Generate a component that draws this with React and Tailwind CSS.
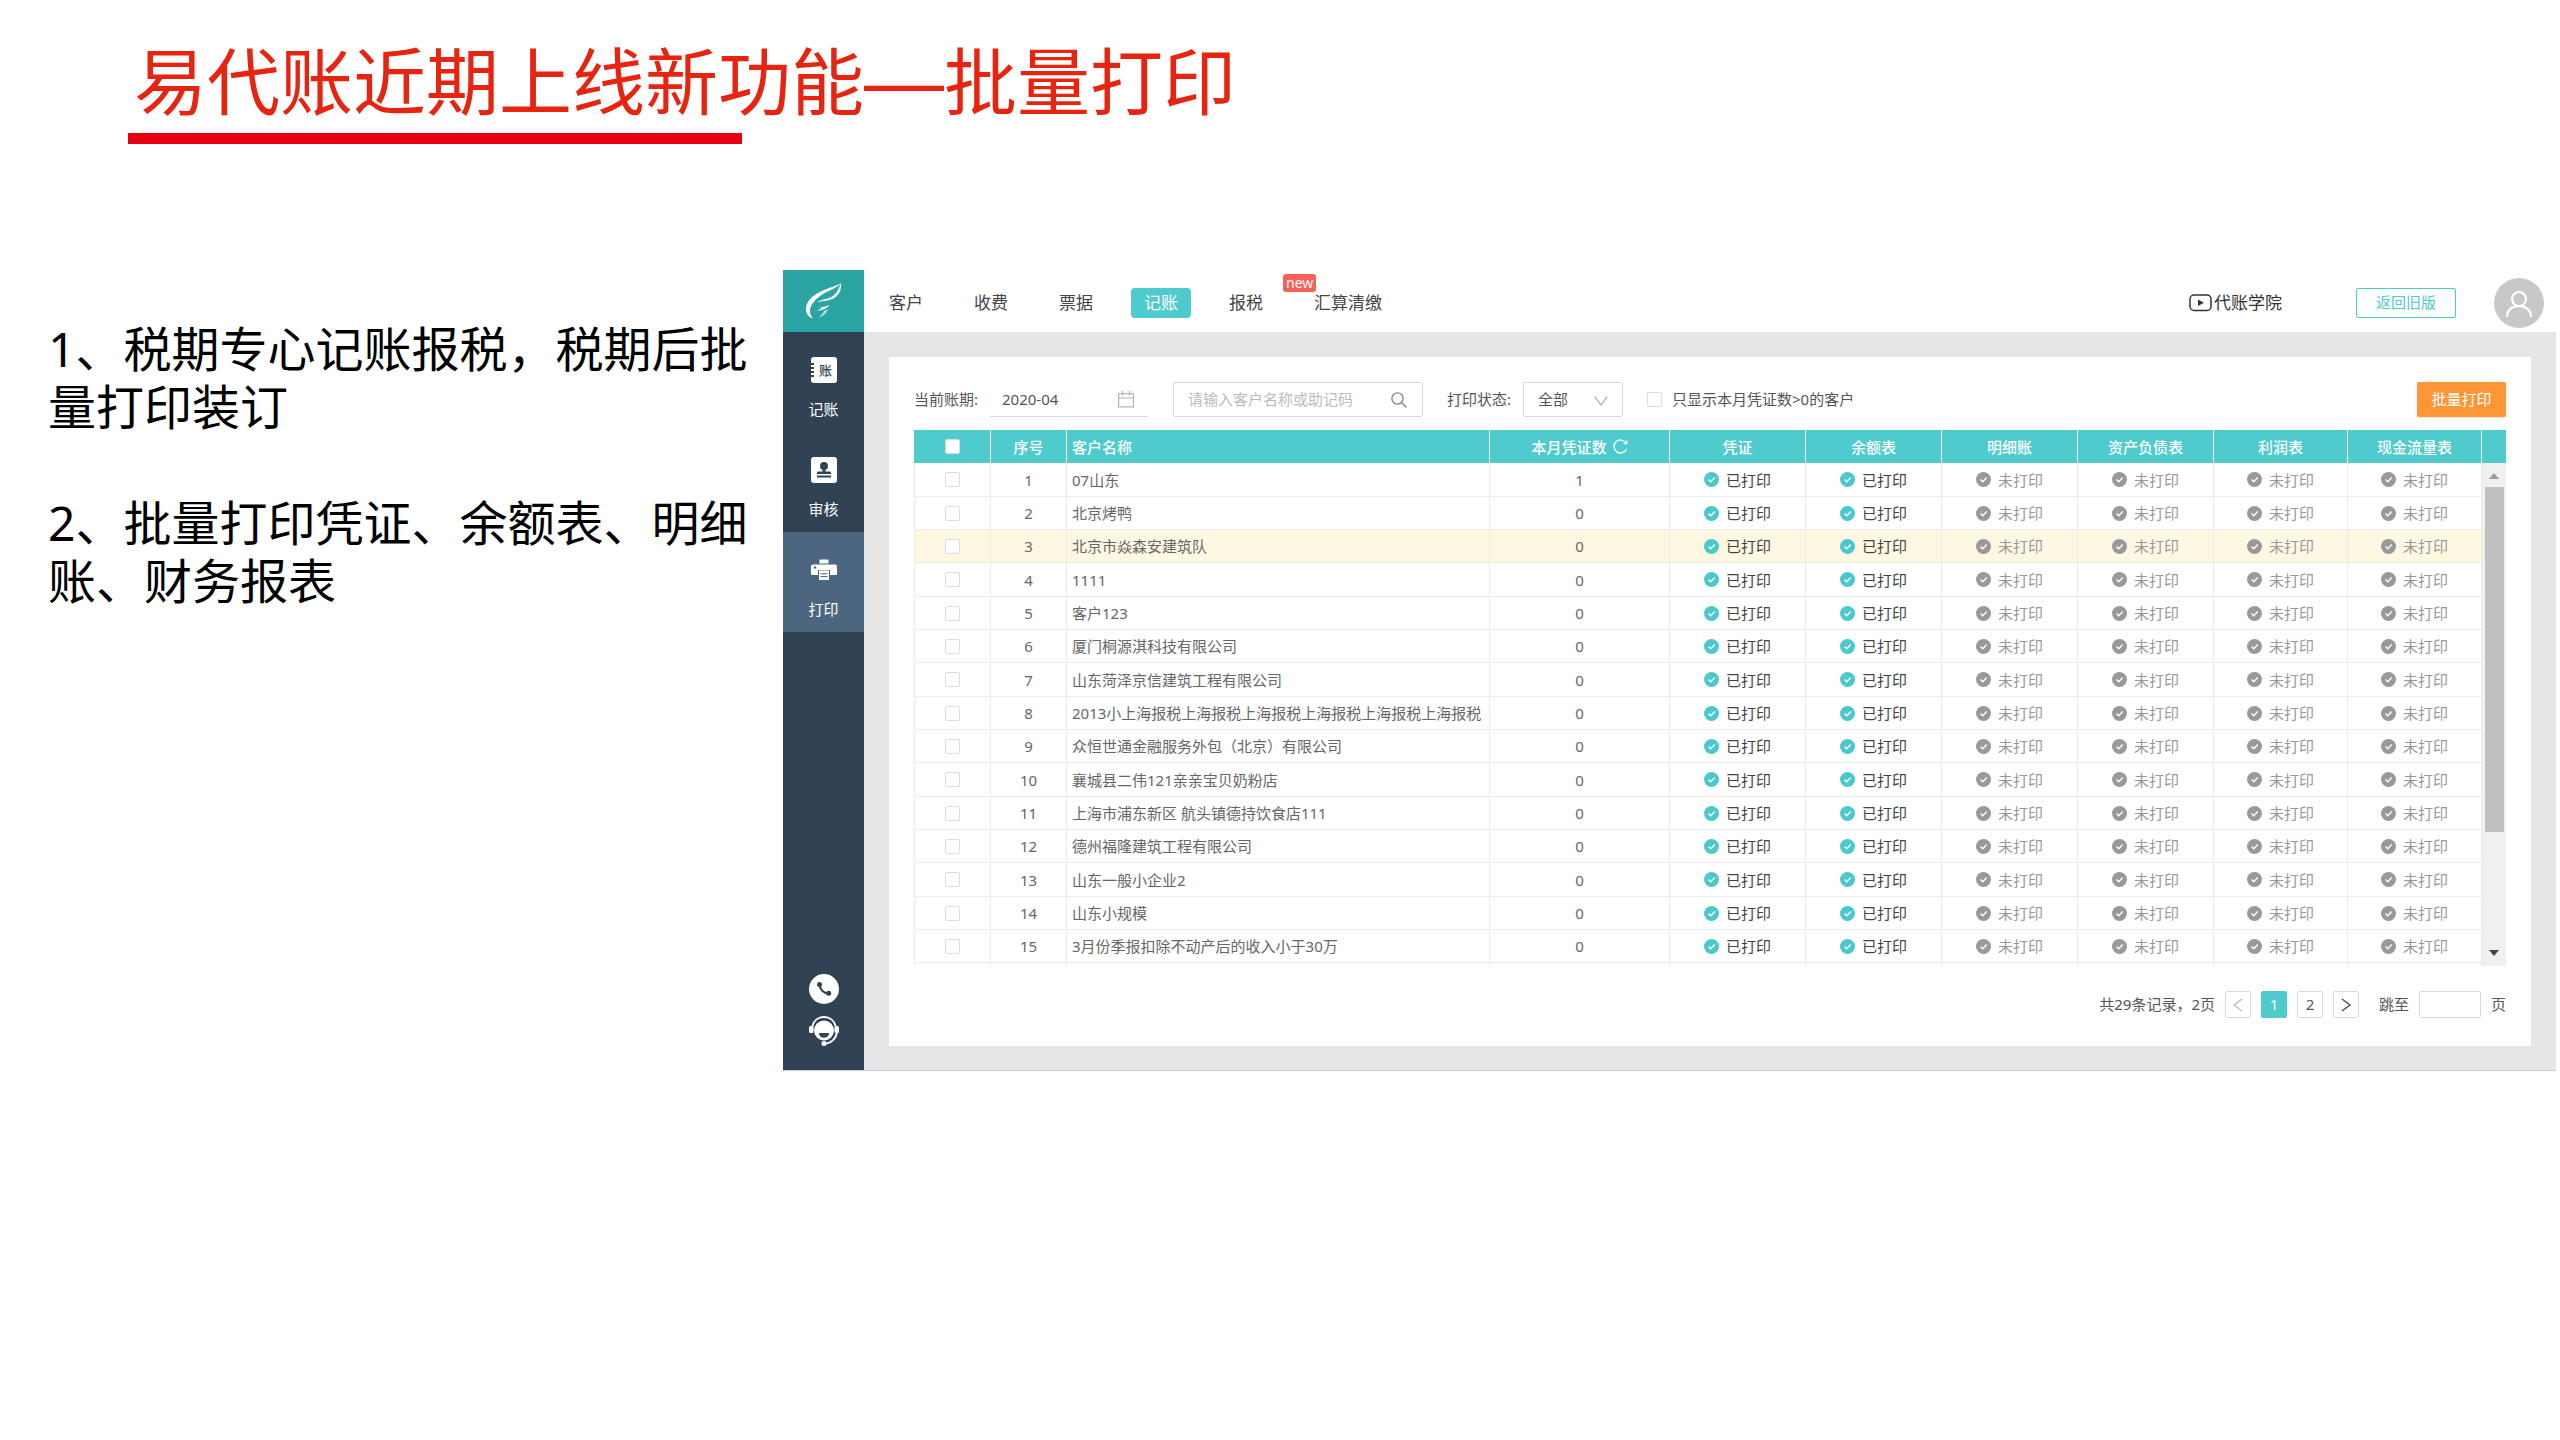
import React, { useState } from 'react'

const NAV = ['客户', '收费', '票据', '记账', '报税', '汇算清缴']

const REPORTS = ['凭证', '余额表', '明细账', '资产负债表', '利润表', '现金流量表']

const CUSTOMERS = [
  { name: '07山东', count: 1 },
  { name: '北京烤鸭', count: 0 },
  { name: '北京市焱森安建筑队', count: 0 },
  { name: '1111', count: 0 },
  { name: '客户123', count: 0 },
  { name: '厦门桐源淇科技有限公司', count: 0 },
  { name: '山东菏泽京信建筑工程有限公司', count: 0 },
  { name: '2013小上海报税上海报税上海报税上海报税上海报税上海报税', count: 0 },
  { name: '众恒世通金融服务外包（北京）有限公司', count: 0 },
  { name: '襄城县二伟121亲亲宝贝奶粉店', count: 0 },
  { name: '上海市浦东新区 航头镇德持饮食店111', count: 0 },
  { name: '德州福隆建筑工程有限公司', count: 0 },
  { name: '山东一般小企业2', count: 0 },
  { name: '山东小规模', count: 0 },
  { name: '3月份季报扣除不动产后的收入小于30万', count: 0 },
]

const checkboxClass =
  'block w-[15px] h-[15px] appearance-none rounded-[2px] border border-[#dcdcdc] bg-white checked:bg-[#4fcacd]'

function LogoIcon() {
  return (
    <svg width="36" height="36" viewBox="0 0 36 36" fill="#fff">
      <path d="M35 0C31 5 24 7 17 11C9 16 4 22 4 28C4 31 5 33 7 35.500C2 34 0 30 0 26C0 18 7 12 16 8C24 4 31 3 35 0z" />
      <path d="M35 0C35.500 6 34 11 29 14.500C24 18 17 18 11 19C17 16 23 16 27 13C31 10 33 5 35 0z" />
      <path d="M24 22C20 26 16 27 11 28C13 26.500 14.500 26 16 25C14.500 25 13.500 25 12 25.500C16 24 20 23.500 24 22z" />
      <path d="M22 26C20 31 17 33 13 34.500C16 31.500 17 30 18 28C19.500 27.500 20.500 27 22 26z" opacity="0.7" />
    </svg>
  )
}

function LedgerIcon() {
  return (
    <span className="relative flex h-[26px] w-[26px] items-center justify-center rounded-[3px] bg-white pl-1 text-[13px] leading-none font-medium text-[#304253]">
      账
      <svg className="absolute top-0 left-0" width="4" height="26" viewBox="0 0 4 26" fill="#304253">
        <rect y="6" width="3" height="2" />
        <rect y="10" width="3" height="2" />
        <rect y="14" width="3" height="2" />
        <rect y="18" width="3" height="2" />
      </svg>
    </span>
  )
}

function StampIcon() {
  return (
    <svg width="26" height="26" viewBox="0 0 26 26">
      <rect width="26" height="26" rx="3" fill="#fff" />
      <g fill="#304253">
        <circle cx="13" cy="9" r="4" />
        <path d="M11.500 11h3v3.500h4c.8 0 1.500.6 1.500 1.500v1H6v-1c0-.9.7-1.500 1.500-1.500h4z" />
        <rect x="6" y="18.500" width="14" height="2" />
      </g>
    </svg>
  )
}

function PrinterIcon() {
  return (
    <svg width="26" height="26" viewBox="0 0 26 26">
      <g fill="#fff">
        <rect x="8.500" y="2.500" width="9" height="4" />
        <path d="M2 7.500h22c1.200 0 2 .8 2 2V17c0 .6-.4 1-1 1H1c-.6 0-1-.4-1-1V9.500c0-1.200.8-2 2-2z" />
      </g>
      <rect x="7" y="13" width="12" height="5" fill="#4b667e" />
      <rect x="8" y="13.500" width="10" height="9.500" fill="#fff" />
      <path d="M9.500 16.800h7M9.500 19.500h7" stroke="#4b667e" strokeWidth="1" />
      <circle cx="4" cy="10.500" r="1.200" fill="#4b667e" />
    </svg>
  )
}

function PhoneIcon() {
  return (
    <svg width="30" height="30" viewBox="0 0 30 30">
      <circle cx="15" cy="15" r="15" fill="#fff" />
      <path d="M10.500 10.500C11 15.500 14.500 19 19.500 19.500" fill="none" stroke="#304253" strokeWidth="2.400" />
      <circle cx="10.500" cy="10.500" r="2.500" fill="#304253" />
      <circle cx="19.700" cy="19.300" r="2.500" fill="#304253" />
    </svg>
  )
}

function SupportIcon() {
  return (
    <svg width="30" height="30" viewBox="0 0 30 30">
      <path d="M3 11C4.500 4.500 9.500 1 15 1s10.500 3.500 12 10" fill="none" stroke="#fff" strokeWidth="1.800" />
      <rect x="0" y="10" width="4.500" height="7" rx="1.500" fill="#fff" />
      <rect x="25.500" y="10" width="4.500" height="7" rx="1.500" fill="#fff" />
      <circle cx="15" cy="14.500" r="10" fill="#fff" />
      <path d="M10 17h10c0 3-2.200 4.700-5 4.700S10 20 10 17z" fill="#304253" />
      <path d="M28 16C27 23 22 27.500 15.500 27.800" fill="none" stroke="#fff" strokeWidth="1.800" />
      <circle cx="15" cy="27.500" r="2.500" fill="#fff" />
    </svg>
  )
}

function VideoIcon() {
  return (
    <svg width="23" height="18" viewBox="0 0 23 18">
      <rect x="1" y="1" width="21" height="15.500" rx="4" fill="none" stroke="#333" strokeWidth="1.500" />
      <path d="M9 5.500v6.500l6-3.200z" fill="#333" />
    </svg>
  )
}

function AvatarIcon() {
  return (
    <svg width="50" height="50" viewBox="0 0 50 50">
      <circle cx="25" cy="25" r="25" fill="#c8c8c8" />
      <g fill="none" stroke="#fff" strokeWidth="2.200">
        <circle cx="25" cy="21" r="7" />
        <path d="M13 39c0-7 5-11 12-11s12 4 12 11" />
      </g>
    </svg>
  )
}

function CalendarIcon() {
  return (
    <svg width="16" height="17" viewBox="0 0 16 17" fill="none" stroke="#b5b5b5" strokeWidth="1.200">
      <path d="M.6 2.600h14.800v13.300H.6zM.6 7h14.800M4.500 0v4.500M11.500 0v4.500" />
    </svg>
  )
}

function SearchIcon() {
  return (
    <svg width="16" height="16" viewBox="0 0 16 16" fill="none" stroke="#888" strokeWidth="1.400">
      <circle cx="6.500" cy="6.500" r="5.600" />
      <path d="M10.500 10.500l5 5" />
    </svg>
  )
}

function ReloadIcon() {
  return (
    <svg width="15" height="15" viewBox="0 0 15 15" fill="none" stroke="#fff" strokeWidth="1.300">
      <path d="M13.500 10A6.500 6.500 0 1 1 13 4" />
      <path d="M13.700 1.500v3.200h-3" />
    </svg>
  )
}

function Status({ done }) {
  return (
    <span className={`flex items-center justify-center gap-[7px] ${done ? 'text-[#444]' : 'text-[#999]'}`}>
      <svg width="15" height="15" viewBox="0 0 15 15">
        <circle cx="7.500" cy="7.500" r="7.500" fill={done ? '#4bc8cb' : '#999'} />
        <path d="M4.500 7.500l2.300 2.300 3.900-4.300" fill="none" stroke="#fff" strokeWidth="1.300" />
      </svg>
      {done ? '已打印' : '未打印'}
    </span>
  )
}

function Sidebar() {
  const items = [
    { label: '记账', icon: <LedgerIcon /> },
    { label: '审核', icon: <StampIcon /> },
    { label: '打印', icon: <PrinterIcon />, active: true },
  ]
  return (
    <aside className="flex w-[81px] shrink-0 flex-col bg-[#304253] text-white">
      <a href="#" aria-label="首页" className="flex h-[62px] items-center justify-center bg-[#2ba5a3]">
        <LogoIcon />
      </a>
      {items.map(item => (
        <a
          key={item.label}
          href="#"
          className={`flex h-[100px] flex-col items-center gap-4 pt-[25px] text-[15px] leading-5 ${item.active ? 'bg-[#4b667e]' : ''}`}
        >
          {item.icon}
          {item.label}
        </a>
      ))}
      <div className="mt-auto flex flex-col items-center gap-3 pb-6">
        <button aria-label="电话"><PhoneIcon /></button>
        <button aria-label="客服"><SupportIcon /></button>
      </div>
    </aside>
  )
}

function TopBar() {
  return (
    <header className="flex h-[62px] items-center bg-white pt-[3px] pr-3 pl-3 text-[17px] text-[#444]">
      <nav className="flex gap-[25px]">
        {NAV.map(item => (
          <a
            key={item}
            href="#"
            className={`relative rounded-[4px] px-[13px] leading-[30px] ${item === '记账' ? 'bg-[#4fcacd] text-white' : ''}`}
          >
            {item}
            {item === '汇算清缴' && (
              <span className="absolute -top-3.5 -left-[18px] h-[18px] rounded-[3px] bg-[#f85f57] px-[3px] text-[14px] leading-[18px] text-white">
                new
              </span>
            )}
          </a>
        ))}
      </nav>
      <a href="#" className="ml-auto flex items-center gap-0.5 text-[#333]">
        <VideoIcon />
        代账学院
      </a>
      <button className="mr-[38px] ml-[74px] h-[30px] w-[100px] rounded-[2px] border border-[#4fcacd] text-[15px] text-[#4fcacd]">
        返回旧版
      </button>
      <button aria-label="账户"><AvatarIcon /></button>
    </header>
  )
}

function Filters() {
  return (
    <div className="flex h-[35px] items-center">
      <label htmlFor="period" className="w-[76px]">当前账期:</label>
      <div className="flex h-[34px] w-[158px] items-center border-b border-[#d9d9d9] pr-[14px] pl-3">
        <input id="period" type="text" defaultValue="2020-04" className="min-w-0 flex-1 outline-none" />
        <CalendarIcon />
      </div>
      <div className="ml-[25px] flex h-[35px] w-[250px] items-center rounded-[2px] border border-[#d9d9d9] pr-[15px] pl-[14px]">
        <input
          type="text"
          aria-label="客户名称或助记码"
          placeholder="请输入客户名称或助记码"
          className="min-w-0 flex-1 outline-none placeholder:text-[#bbb]"
        />
        <SearchIcon />
      </div>
      <label htmlFor="status" className="ml-6 w-[76px]">打印状态:</label>
      <div className="relative">
        <select
          id="status"
          className="h-[35px] w-[100px] appearance-none rounded-[2px] border border-[#d9d9d9] bg-white pl-[14px] outline-none"
        >
          <option>全部</option>
        </select>
        <svg
          className="pointer-events-none absolute top-[14px] right-[15px]"
          width="14"
          height="10"
          viewBox="0 0 14 10"
          fill="none"
          stroke="#aaa"
          strokeWidth="1.200"
        >
          <path d="M.7.600l6.300 8.400L13.300.600" />
        </svg>
      </div>
      <label className="ml-6 flex items-center gap-[10px]">
        <input type="checkbox" className={checkboxClass} />
        只显示本月凭证数&gt;0的客户
      </label>
      <button className="ml-auto h-[35px] w-[89px] rounded-[2px] bg-[#fd9637] text-white shadow-sm">批量打印</button>
    </div>
  )
}

function ScrollTrack() {
  return (
    <div className="flex h-[503px] flex-col items-center bg-[#f0f0f0] py-[10px]">
      <svg width="10" height="6" viewBox="0 0 10 6" fill="#999"><path d="M0 6l5-6 5 6z" /></svg>
      <div className="mt-2 h-[345px] w-[19px] bg-[#c0c0c0]" />
      <svg className="mt-auto" width="10" height="6" viewBox="0 0 10 6" fill="#444"><path d="M0 0h10l-5 6z" /></svg>
    </div>
  )
}

function CustomerTable() {
  const [selected, setSelected] = useState([])
  const toggle = i => setSelected(s => (s.includes(i) ? s.filter(x => x !== i) : [...s, i]))
  const all = selected.length === CUSTOMERS.length

  const th = 'border-r border-white p-0 font-medium'
  const td = 'border-r border-b border-[#ececec] p-0'

  return (
    <table className="mt-[13px] w-full table-fixed border-separate border-spacing-0 text-center leading-5">
      <colgroup>
        <col className="w-[77px]" />
        <col className="w-[76px]" />
        <col />
        <col className="w-[180px]" />
        <col className="w-[136px]" />
        <col className="w-[136px]" />
        <col className="w-[136px]" />
        <col className="w-[136px]" />
        <col className="w-[134px]" />
        <col className="w-[134px]" />
        <col className="w-[24px]" />
      </colgroup>
      <thead className="bg-[#4fcacd] text-white">
        <tr className="h-[33px]">
          <th className={th}>
            <input
              type="checkbox"
              aria-label="全选"
              checked={all}
              onChange={() => setSelected(all ? [] : CUSTOMERS.map((_, i) => i))}
              className={`${checkboxClass} mx-auto`}
            />
          </th>
          <th className={th}>序号</th>
          <th className={`${th} pl-[5px] text-left`}>客户名称</th>
          <th className={th}>
            <span className="flex items-center justify-center gap-1.5">
              本月凭证数
              <ReloadIcon />
            </span>
          </th>
          {REPORTS.map(r => <th key={r} className={th}>{r}</th>)}
          <th className="p-0" />
        </tr>
      </thead>
      <tbody className="text-[#666]">
        {CUSTOMERS.map((c, i) => (
          <tr key={i} className={`h-[33px] nth-[3n+1]:h-[34px] ${i === 2 ? 'bg-[#fef8e2]' : ''}`}>
            <td className={`${td} border-l`}>
              <input
                type="checkbox"
                aria-label={c.name}
                checked={selected.includes(i)}
                onChange={() => toggle(i)}
                className={`${checkboxClass} mx-auto`}
              />
            </td>
            <td className={td}>{i + 1}</td>
            <td className={`${td} truncate pl-[5px] text-left`}>{c.name}</td>
            <td className={td}>{c.count}</td>
            {REPORTS.map((r, k) => (
              <td key={r} className={td}><Status done={k < 2} /></td>
            ))}
            {i === 0 && (
              <td rowSpan={CUSTOMERS.length + 1} className="bg-white p-0 align-top"><ScrollTrack /></td>
            )}
          </tr>
        ))}
        <tr className="h-[3px]">
          <td className="border-r border-l border-[#ececec] p-0" />
          {Array.from({ length: 9 }, (_, i) => <td key={i} className="border-r border-[#ececec] p-0" />)}
        </tr>
      </tbody>
    </table>
  )
}

function Pagination() {
  const page = 'flex h-[27px] w-[26px] items-center justify-center rounded-[2px] border'
  return (
    <div className="mt-[25px] flex items-center justify-end gap-[10px]">
      <span>共29条记录，2页</span>
      <button aria-label="上一页" className={`${page} border-[#d9d9d9]`}>
        <svg width="10" height="14" viewBox="0 0 10 14" fill="none" stroke="#bbb" strokeWidth="1.300"><path d="M9 1L1 7l8 6" /></svg>
      </button>
      <button className={`${page} border-[#4fcacd] bg-[#4fcacd] text-white`}>1</button>
      <button className={`${page} border-[#d9d9d9]`}>2</button>
      <button aria-label="下一页" className={`${page} border-[#d9d9d9]`}>
        <svg width="10" height="14" viewBox="0 0 10 14" fill="none" stroke="#444" strokeWidth="1.300"><path d="M1 1l8 6-8 6" /></svg>
      </button>
      <label htmlFor="jump" className="ml-[10px]">跳至</label>
      <input id="jump" type="text" className="h-[27px] w-[62px] rounded-[2px] border border-[#d9d9d9] px-2 outline-none" />
      <span>页</span>
    </div>
  )
}

export default function App() {
  return (
    <main className="min-h-screen bg-white font-['Noto_Sans','Noto_Sans_CJK_SC',sans-serif]">
      <div className="pt-[22px] pl-[128px]">
        <h1 className="pl-[6px] font-['Noto_Sans_CJK_SC',sans-serif] text-[73px] leading-[111px] text-[#e72410]">
          易代账近期上线新功能<span className="font-['Liberation_Sans',sans-serif] text-[80px] leading-none">—</span>批量打印
        </h1>
        <div className="h-[11px] w-[614px] bg-[#e60012]" />
      </div>

      <div className="mt-[126px] flex pr-1">
        <section className="w-[783px] shrink-0 pt-[50px] pr-3 pl-12 text-[48px] leading-[58px] text-black">
          <p>1、税期专心记账报税，税期后批量打印装订</p>
          <p className="mt-[58px]">2、批量打印凭证、余额表、明细账、财务报表</p>
        </section>

        <section className="flex min-w-0 flex-1 border-b border-[#c9d2d8]">
          <Sidebar />
          <div className="min-w-0 flex-1 bg-[#e6e6e6]">
            <TopBar />
            <div className="m-[25px] mb-6 bg-white px-[25px] pt-[25px] pb-7 text-[15px] text-[#555]">
              <Filters />
              <CustomerTable />
              <Pagination />
            </div>
          </div>
        </section>
      </div>
    </main>
  )
}
